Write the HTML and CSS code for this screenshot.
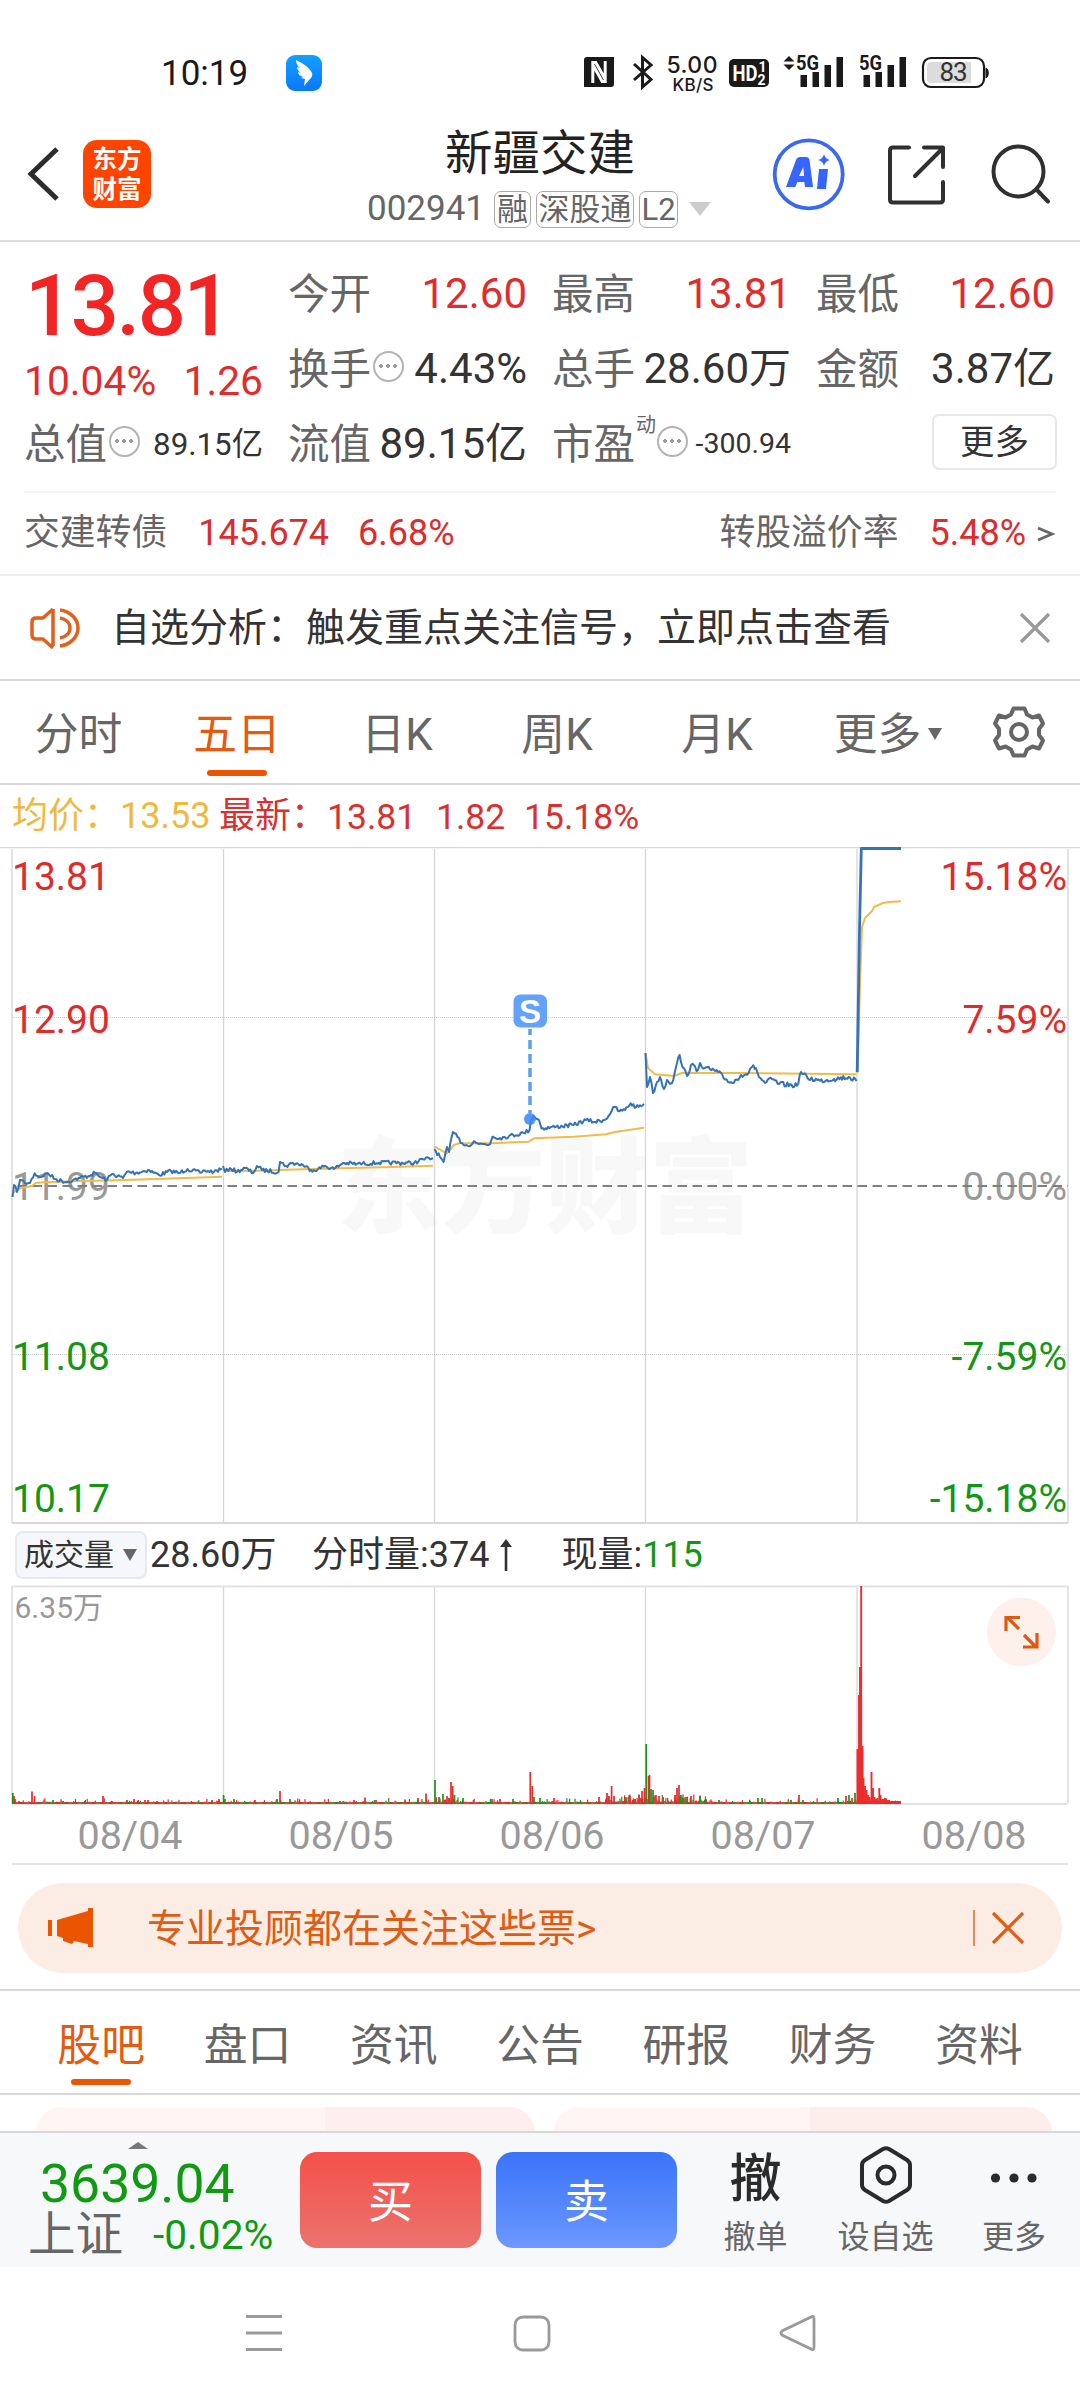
FILE: index.html
```html
<!DOCTYPE html>
<html lang="zh-CN">
<head>
<meta charset="utf-8">
<title>新疆交建 002941</title>
<link rel="stylesheet" href="styles.css">
</head>
<body>
<div class="status">
  <span class="clock">10:19</span>
  <svg class="app-badge" width="36" height="36" viewBox="0 0 36 36"><defs><linearGradient id="bd" x1="0" y1="0" x2="0" y2="1"><stop offset="0" stop-color="#12a0ff"/><stop offset="1" stop-color="#0b78fb"/></linearGradient></defs><rect width="36" height="36" rx="9" fill="url(#bd)"/><path d="M10 5c8 4 14 8 16 13 1 3-1 5-3 7l-5 6 1-7-4-1 2-1c-3-1-5-3-5-5l3 1c-3-2-4-4-4-6l3 1c-3-3-4-5-4-8z" fill="#fff"/></svg>
  <svg class="sys" width="420" height="48" viewBox="575 46 420 48">
    <path fill="#1a1a1a" d="M587 57h27v27q0 3-3 3h-27V60q0-3 3-3z"/>
    <path d="M592.800 83V62.500h3l9 16M605.200 61v20.500h-3l-9-16" fill="none" stroke="#fff" stroke-width="3"/>
    <path d="M634 64l17 15.500-8.500 7.500V57.500l8.500 7.500-17 15" fill="none" stroke="#1a1a1a" stroke-width="3"/>
    <text x="666.500" y="73" class="sp1" textLength="51">5.00</text><text x="672.500" y="90.500" class="sp2" textLength="41">KB/S</text>
    <rect x="729" y="59" width="40" height="28" rx="5" fill="#1a1a1a"/>
    <text x="732.500" y="81" class="hd" textLength="25" lengthAdjust="spacingAndGlyphs">HD</text><text x="758.500" y="72" class="hds">1</text><text x="757.500" y="84.500" class="hds">2</text>
    <path d="M783.500 61.500L789 56l5.500 5.500zM783.500 64.500L789 70l5.500-5.500z" fill="#1a1a1a"/>
    <g fill="#1a1a1a"><text x="796" y="70" class="g5" textLength="23" lengthAdjust="spacingAndGlyphs">5G</text><path d="M800.500 75h6.500v12h-6.500zM812.500 72h6.500v15h-6.500zM824.500 65h6.500v22h-6.500zM836.500 57h6.500v30h-6.500z"/></g>
    <g fill="#1a1a1a" transform="translate(63 0)"><text x="796" y="70" class="g5" textLength="23" lengthAdjust="spacingAndGlyphs">5G</text><path d="M800.500 75h6.500v12h-6.500zM812.500 72h6.500v15h-6.500zM824.500 65h6.500v22h-6.500zM836.500 57h6.500v30h-6.500z"/></g>
    <rect x="923" y="58" width="61" height="29" rx="8" fill="#fff" stroke="#1a1a1a" stroke-width="2.200"/><path d="M931 62h40v21h-40a4 4 0 0 1-4-4V66a4 4 0 0 1 4-4z" fill="#dcdcdc"/><path d="M986 68c3 1 3 9 0 10z" fill="#1a1a1a" stroke="#1a1a1a"/>
    <text x="939.500" y="81" class="bat">83</text>
  </svg>
</div>

<header class="head">
  <svg class="back" width="36" height="60" viewBox="0 0 36 60"><path d="M32 5L6 30l26 25" fill="none" stroke="#2c2c2c" stroke-width="5"/></svg>
  <div class="logo"><span>东方</span><span>财富</span></div>
  <div class="title">
    <h1>新疆交建</h1>
    <p><span class="code">002941</span><b>融</b><b class="wide">深股通</b><b>L2</b><i></i></p>
  </div>
  <svg class="head-ic" width="300" height="80" viewBox="770 134 300 80" fill="none">
    <circle cx="808.700" cy="174.300" r="34" stroke="#3b68f0" stroke-width="3.800"/>
    <path fill="#3565fb" fill-rule="evenodd" d="M786 187l10-27q1-3 4-3h6q3 0 3.500 3l3.500 27h-8l-.7-5h-7l-2 5zM799 176h5l-.7-9zM819 169h9l-2 20h-9zM824 154q1 5 6 6-5 1-6 6-1-5-6-6 5-1 6-6z"/>
    <g stroke="#303030" stroke-width="4" stroke-linecap="round" stroke-linejoin="round"><path d="M909 147.500h-16q-3 0-3 3v49q0 3 3 3h47q3 0 3-3V182M924 147.500h19V167M942 149l-27 27"/><circle cx="1018.500" cy="171.500" r="25"/><path d="M1037 190l11 11.500"/></g>
  </svg>
</header>

<section class="quote">
  <div class="big">13.81</div>
  <div class="cell"><label>今开</label><em class="red">12.60</em></div>
  <div class="cell"><label>最高</label><em class="red">13.81</em></div>
  <div class="cell"><label>最低</label><em class="red">12.60</em></div>
  <div class="cell chg"><em class="red">10.04%</em><em class="red">1.26</em></div>
  <div class="cell"><label>换手</label><u></u><em>4.43%</em></div>
  <div class="cell"><label>总手</label><em>28.60万</em></div>
  <div class="cell"><label>金额</label><em>3.87亿</em></div>
  <div class="cell"><label>总值</label><u></u><em class="sm">89.15亿</em></div>
  <div class="cell"><label>流值</label><em>89.15亿</em></div>
  <div class="cell"><label>市盈</label><small>动</small><u></u><em class="sm pe">-300.94</em></div>
  <div class="cell"><span class="more">更多</span></div>
</section>

<section class="bond"><span>交建转债</span><em class="b1">145.674</em><em class="b2">6.68%</em><span class="prem">转股溢价率</span><em class="b3">5.48%</em><svg width="20" height="20" viewBox="0 0 20 20"><path d="M2 4l14 6-14 6" fill="none" stroke="#666" stroke-width="2.800"/></svg></section>

<section class="notice">
  <svg width="54" height="50" viewBox="28 602 54 50" fill="none" stroke="#e0601c" stroke-width="3.500"><path d="M53 608v37M53 608l-10 9h-7q-4 0-4 4v13q0 4 4 4h7l10 9" stroke-linejoin="round"/><path d="M60 609c9 1 18 8 18 18s-9 17-18 18M60 617c6 1 10 5 10 10s-4 9-10 10"/></svg>
  <span>自选分析：触发重点关注信号，立即点击查看</span>
  <svg class="x" width="34" height="34" viewBox="0 0 34 34"><path d="M3 3l28 28M31 3L3 31" stroke="#999" stroke-width="3.200"/></svg>
</section>

<nav class="periods">
  <span>分时</span><span class="on">五日</span><span>日K</span><span>周K</span><span>月K</span><span class="mr">更多<i></i></span>
  <svg width="56" height="56" viewBox="-28 -28 56 56" fill="none" stroke="#666" stroke-width="4"><path stroke-linejoin="round" d="M-5.500-23.500H5.500L8-17.500 13.500-14.500 20-16.500 24-8.500 20-3V3L24 8.500 20 16.500 13.500 14.500 8 17.500 5.500 23.500H-5.500L-8 17.500-13.500 14.500-20 16.500-24 8.500-20 3V-3L-24-8.500-20-16.500-13.500-14.500-8-17.500Z"/><circle r="8"/></svg>
</nav>

<section class="legend"><span class="avg">均价：</span><span class="avg v1">13.53</span><span class="now">最新：</span><span class="v2">13.81</span><span class="v3">1.82</span><span class="v4">15.18%</span></section>

<svg class="price" width="1080" height="678" viewBox="0 847 1080 678">
  <text class="wm" x="337" y="1225" textLength="416">东方财富</text>
  <path d="M0 847.500h1080" stroke="#d8d8d8" stroke-width="1.500"/>
  <path d="M223.500 849v674M434.500 849v674M645.500 849v674M857 849v674" stroke="#d6d6d6" stroke-width="1.300"/>
  <path d="M12 849v674M1068 849v674" stroke="#e2e2e2" stroke-width="2"/>
  <path d="M12 1523h1056" stroke="#d8d8d8" stroke-width="2"/>
  <path d="M12 1017.500h1056M12 1354.500h1056" stroke="#ccc" stroke-dasharray="1 1"/>
  <g class="axis"><text x="12" y="1200" class="gy">11.99</text><text x="1067" y="1200" class="gy r">0.00%</text></g>
  <path d="M12 1186h1056" stroke="#808080" stroke-width="2" stroke-dasharray="9.500 5.500" stroke-dashoffset="-5.500"/>
  <g id="lines" fill="none" stroke-linejoin="round"></g>
  <g class="axis">
    <text x="12" y="890" class="rd">13.81</text><text x="12" y="1033" class="rd">12.90</text><text x="12" y="1370" class="gn">11.08</text><text x="12" y="1512" class="gn">10.17</text>
    <text x="1067" y="890" class="rd r">15.18%</text><text x="1067" y="1033" class="rd r">7.59%</text><text x="1067" y="1370" class="gn r">-7.59%</text><text x="1067" y="1512" class="gn r">-15.18%</text>
  </g>
  <path d="M530 1029v84" stroke="#5c9fec" stroke-width="3.500" stroke-dasharray="9 5" stroke-dashoffset="3"/>
  <circle cx="530" cy="1119" r="6" fill="#3a86f6" opacity=".85"/>
  <rect x="513.500" y="994.500" width="33.500" height="33" rx="7" fill="#64a1fb"/><text x="530" y="1023" class="s">S</text>
</svg>

<section class="volhead"><span class="chip">成交量<i></i></span><span class="q1">28.60万</span><span class="q2">分时量:374</span><svg width="14" height="36" viewBox="0 0 14 36"><path d="M7 34V5" stroke="#333" stroke-width="2.600"/><path d="M1 10l6-8 6 8z" fill="#333"/></svg><span class="q3">现量:<b>115</b></span></section>

<svg class="vol" width="1080" height="282" viewBox="0 1584 1080 282">
  <path d="M12 1586.500h1056M12 1586v217M1068 1586v217" stroke="#e2e2e2" stroke-width="1.800" fill="none"/>
  <path d="M223.500 1587v217M434.500 1587v217M645.500 1587v217M857 1587v217" stroke="#d8d8d8" stroke-width="1.300"/>
  <path d="M12 1804h1056M12 1864h1056" stroke="#e3e3e3" stroke-width="2"/>
  <g id="bars"></g>
  <text class="vmax" x="14.500" y="1618">6.35万</text>
  <g class="dates"><text x="130" y="1849">08/04</text><text x="341" y="1849">08/05</text><text x="552" y="1849">08/06</text><text x="763" y="1849">08/07</text><text x="974" y="1849">08/08</text></g>
  <circle cx="1021.500" cy="1632" r="34.500" fill="#fef1eb"/>
  <path d="M1019 1629l-11-11M1006 1631v-13.500h14M1024 1635l11 11M1037 1633v14h-14" fill="none" stroke="#dd5a12" stroke-width="3.200"/>
</svg>

<section class="promo">
  <svg width="48" height="42" viewBox="47 1907 48 42" fill="#eb5500"><path d="M48 1920h4v16h-4zM57 1920l31-9v-3h5v39h-5v-3l-14-3-2 3-9-3v-3l-6-2z"/></svg>
  <span>专业投顾都在关注这些票&gt;</span><s></s>
  <svg class="px" width="34" height="34" viewBox="0 0 34 34"><path d="M2 2l30 30M32 2L2 32" stroke="#e55c14" stroke-width="3.200"/></svg>
</section>

<nav class="tabs"><span class="on">股吧</span><span>盘口</span><span>资讯</span><span>公告</span><span>研报</span><span>财务</span><span>资料</span></nav>
<section class="cards"><div class="c1"></div><div class="c2"></div></section>

<footer class="bar">
  <div class="index"><i></i><strong>3639.04</strong><p><span>上证</span><em>-0.02%</em></p></div>
  <a class="buy">买</a><a class="sell">卖</a>
  <div class="act a1"><b>撤</b><span>撤单</span></div>
  <div class="act a2"><svg width="60" height="62" viewBox="-30 -31 60 62" fill="none" stroke="#2b2b2b" stroke-width="4"><path stroke-linejoin="round" d="M-3-26q3-1.500 6 0L21-15q3 2 3 5V10q0 3-3 5L3 26q-3 1.500-6 0L-21 15q-3-2-3-5V-10q0-3 3-5z"/><circle r="8.500"/></svg><span>设自选</span></div>
  <div class="act a3"><svg width="60" height="62" viewBox="-30 -31 60 62" fill="#2b2b2b"><circle cx="-18.500" cy="3" r="4.600"/><circle cy="3" r="4.600"/><circle cx="18" cy="3" r="4.600"/></svg><span>更多</span></div>
</footer>
<div class="sysnav">
  <svg width="1080" height="60" viewBox="0 2304 1080 60" fill="none" stroke="#9a9a9a" stroke-width="2.800"><path d="M246 2317.500h36M246 2334h36M246 2350.500h36"/><rect x="515" y="2318" width="34" height="33" rx="8"/><path d="M814 2320v28q0 4-3 2l-29-14q-2-2 0-4l29-14q3-2 3 2z"/></svg>
</div>
<script src="chart.js"></script>
</body>
</html>
```
FILE: styles.css
```css
*{box-sizing:border-box}
html,body{margin:0;padding:0}
body{width:1080px;height:2400px;background:#fff;font-family:Roboto,"Noto Sans CJK SC",sans-serif;line-height:1.2;color:#333;overflow:hidden;display:flex;flex-direction:column}
body>*{flex:none}
svg{display:block;flex:none}
em,i,u,s{font-style:normal;text-decoration:none}
h1,p{margin:0;font-weight:400}
span,em{white-space:nowrap}

.status{height:108px;padding-top:46px;display:flex;align-items:flex-start}
.clock{margin:6px 0 0 161px;width:125px;font-size:35px;line-height:44px;color:#1a1a1a}
.app-badge{margin-top:9px}
.sys{margin-left:253px;overflow:visible}
.sp1{font:500 23px Inter,sans-serif;fill:#1a1a1a}
.sp2{font:500 17px Inter,sans-serif;fill:#1a1a1a}
.hd{font:700 22px Roboto,sans-serif;fill:#fff}
.hds{font:700 14px Roboto,sans-serif;fill:#fff}
.g5{font:700 20px Roboto,sans-serif}
.bat{font:400 26px Roboto,sans-serif;fill:#333;letter-spacing:-1px}

.head{height:134px;border-bottom:2px solid #ddd;display:flex;align-items:flex-start}
.back{margin:36px 0 0 25px}
.logo{margin:32px 0 0 22px;width:68px;height:68px;border-radius:14px;background:#ff4400;color:#fff;font-weight:700;font-size:24.500px;display:flex;flex-direction:column;align-items:center;padding-top:5px}
.logo span{line-height:30px}
.title{width:500px;margin-left:140px}
.title h1{font-size:47.500px;line-height:60px;margin:16px 0 0 154px;color:#222}
.title p{display:flex;align-items:center;color:#666;margin:6px 0 0 76px;height:38px}
.code{font-size:35px;width:127px}
.title b{font-weight:400;font-size:31px;line-height:35px;height:37px;border:1.500px solid #aaa;border-radius:7px;margin-right:5px;width:37px;display:flex;justify-content:center}
.title b.wide{width:98px}
.title b:last-of-type{width:39px}
.title i{border:11px solid transparent;border-top:14px solid #ccc;border-bottom:0;margin-left:6px}
.head-ic{margin:26px 0 0 -21px}

.quote{height:250px;padding:15px 25px 0;display:grid;grid-template-columns:repeat(4,238px);column-gap:26px;grid-template-rows:75px 75px 75px}
.big{font-size:85px;font-weight:500;line-height:98px;color:#f22424;letter-spacing:-2.500px;height:75px}
.cell{display:flex;align-items:center;font-size:42px;height:75px}
.cell label{color:#666;font-size:41.500px;margin-left:-1px}
.cell em{margin-left:auto}
.cell .sm{font-size:31.300px}
.cell .pe{font-size:28.500px}
.cell small{font-size:20px;color:#666;margin:-40px -1px 0 1px}
.cell u{width:31px;height:31px;border:2.500px solid #b3b3b3;border-radius:50%;margin:-6px 0 0 2px;background:radial-gradient(circle 2px at 6px 13px,#999 99%,transparent),radial-gradient(circle 2px at 13px 13px,#999 99%,transparent),radial-gradient(circle 2px at 20px 13px,#999 99%,transparent)}
.red{color:#e22b2b}
.chg{padding-top:24px;font-size:40.800px}
.chg em:first-child{margin-left:-1px}
.more{margin:-5px -2px 0 auto;width:125px;height:56px;border:2px solid #e8e8e8;border-radius:7px;font-size:34.500px;line-height:52px;text-align:center}

.bond{height:85px;margin-top:-1px;padding:2px 24px 0;display:flex;align-items:center;font-size:35.800px;color:#666;border-bottom:2px solid #eee;background:linear-gradient(#f4f4f4,#f4f4f4) 24px 0/1032px 2px no-repeat}
.bond em{color:#dc2c2c;font-size:36px}
.b1{margin-left:31px}.b2{margin-left:29px}
.bond .prem{margin-left:auto}
.b3{margin:0 10px 0 31px}

.notice{height:105px;display:flex;align-items:center;border-bottom:2px solid #d8d8d8;padding:1px 29px 0 28px;font-size:39px}
.notice span{margin-left:29px}
.notice .x{margin-left:auto;margin-right:-1px}

.periods{height:104px;border-bottom:2px solid #d8d8d8;display:flex;align-items:center;font-size:43.800px;color:#666}
.periods span{width:160px;text-align:center;line-height:111px;height:104px;position:relative}
.periods span:first-child{width:157px}
.periods .mr{width:182px}
.periods .mr i{display:inline-block;border:7.500px solid transparent;border-top:12px solid #666;border-bottom:0;margin:0 0 10px 7px}
.periods svg{margin-left:12px}
.on{color:#e35a10}
.on::after{content:"";position:absolute;left:50%;margin-left:-30px;bottom:8px;width:60px;height:6px;border-radius:3px;background:#ea5504}

.legend{height:62px;padding-top:2px;display:flex;align-items:center;font-size:36px;color:#d93030;padding-left:12px}
.legend .avg{color:#f0b93e}
.legend span{width:108px}
.legend .v1{width:99px;font-size:36px}
.legend .v2{width:109px;font-size:35.500px}
.legend .v3{width:88px;font-size:35.500px}
.legend .v4{font-size:35.500px}

.axis text{font:400 39px Roboto,sans-serif}
.axis .r{text-anchor:end}
.rd{fill:#dd2c2c}.gn{fill:#149614}.gy{fill:#999}
.wm{font:900 104px "Noto Sans CJK SC",sans-serif;fill:#f8f8f8}
.s{font:700 33px "Liberation Sans",sans-serif;fill:#fff;text-anchor:middle}

.volhead{height:59px;display:flex;align-items:center;font-size:36px;padding:1px 0 0 15px}
.chip{width:132px;height:48px;background:#f5f7fa;border:2px solid #e6e9ee;border-radius:8px;font-size:30px;line-height:44px;padding-left:7px;margin-top:-1px}
.chip i{display:inline-block;border:7px solid transparent;border-top:12px solid #666;border-bottom:0;margin:0 0 4px 9px}
.q1{width:166px;margin-left:3px;padding-top:1px}
.q2{margin-right:10px;margin-left:-4px;padding-top:1px}
.q3{margin-left:48px;padding-top:1px}
.q3 b{font-weight:400;color:#149614}
.vmax{font:400 30px Roboto,"Noto Sans CJK SC",sans-serif;fill:#999}
.dates text{font:400 39.500px Roboto,sans-serif;fill:#999;text-anchor:middle}

.promo{margin:17px 18px 16px;height:90px;border-radius:50px;background:#fcede4;display:flex;align-items:center;padding-left:29px;font-size:39px;color:#df5c14}
.promo span{margin-left:52px;margin-right:auto;padding-top:2px}
.promo s{width:2px;height:36px;background:#e08a5c}
.promo .px{margin:0 37px 0 16px}

.tabs{height:106px;border-top:2px solid #d8d8d8;border-bottom:2px solid #d8d8d8;display:flex;padding-left:28px;font-size:43.800px;color:#666}
.tabs span{width:146.300px;text-align:center;line-height:111px;height:102px;position:relative}
.tabs .on{color:#e35a10}
.cards{height:36px;padding:12px 28px 0 36px;display:flex;gap:19px;overflow:hidden}
.cards div{height:60px;border-radius:26px 26px 0 0;width:499px;background:linear-gradient(90deg,#fff5f3 58%,#fdefed 58%)}
.cards .c2{background:linear-gradient(90deg,#fff5f3 51.500%,#fdeeec 51.500%)}

.bar{height:136px;background:#f6f8fa;border-top:2px solid #d8d8d8;display:flex;align-items:flex-start}
.index{width:300px;display:flex;flex-direction:column;padding-left:28px}
.index i{border:10px solid transparent;border-bottom:7px solid #777;border-top:0;margin:9px 0 0 100px;width:0}
.index strong{font-weight:400;font-size:53.500px;line-height:60px;color:#0f9a12;margin:5px 0 0 12px}
.index p{display:flex;align-items:center;font-size:47.500px;line-height:48px;margin-top:-3px;color:#666}
.index em{font-size:40.700px;color:#0f9a12;margin:-1px 0 0 30px}
.buy,.sell{width:181px;height:96px;border-radius:17px;margin:19px 15px 0 0;color:#fff;font-size:45px;line-height:101px;text-align:center}
.buy{background:linear-gradient(#f4504a,#eb736d)}
.sell{background:linear-gradient(#3a74f9,#6c98ff);margin-right:31px}
.act{width:95px;text-align:center;font-size:32px;color:#666;display:flex;flex-direction:column;align-items:center;padding-top:11px}
.act svg,.act b{height:62px}
.act b{font-size:52px;line-height:71px;font-weight:500;color:#2b2b2b}
.act span{line-height:40px;margin-top:11px}
.act.a2{width:165px}
.act.a3{width:92px}
.sysnav{padding-top:36px}
```
FILE: chart.js
```js
// Deterministic pseudo-random source, so that the small ticks never change between loads.
let seed = 7;
const rnd = () => (seed = (seed * 16807) % 2147483647) / 2147483647;
const NS = 'http://www.w3.org/2000/svg';
const pairs = s => s.trim().split(/\s+/).map(p => p.split(',').map(Number));

function line(points, color, jitter, width) {
  let d = '';
  points.forEach(([x, y], i) => {
    if (i && jitter) {
      const [px, py] = points[i - 1];
      const n = Math.floor((x - px) / 1.3);
      for (let k = 1; k < n; k++) {
        d += `L${(px + (x - px) * k / n).toFixed(1)} ${(py + (y - py) * k / n + (rnd() - .5) * jitter).toFixed(1)}`;
      }
    }
    d += (i ? 'L' : 'M') + x + ' ' + y;
  });
  const p = document.createElementNS(NS, 'path');
  p.setAttribute('d', d);
  p.setAttribute('stroke', color);
  p.setAttribute('stroke-width', width);
  document.getElementById('lines').appendChild(p);
}

const average = [
  '12.5,1193 21,1188 32,1186 36,1182.700 71,1181.300 125,1180 179,1178.300 222,1176.700',
  '223,1171 257,1170.700 286,1169.700 339,1168.300 393,1167 433,1165.700',
  '434.500,1146.700 447,1153.300 454,1145 459,1143.300 491,1143.300 529,1141.700 534,1138.300 574,1136.700 606,1134.300 615,1132 644,1127.700',
  '645.500,1053 648,1068 655,1074.300 674,1076 682,1073 741,1073 856.500,1074.300',
  '857.500,1073 860,983 862,927 865,918 872,911 874,907 883,903 889,902 901,901.300'
];
const price = [
  '12.500,1197 14,1185 17,1192 20,1180 25,1183 30,1183 34.600,1173.300 39,1177 48,1173.300 55,1179 66,1182 73,1180 80,1178 91,1175 95,1172.700 100,1177 107,1180 112,1174 123,1178 127,1171.700 136,1173 148,1170 159,1175 171,1171 179,1173 187.500,1169 200,1172.700 205,1170.700 214,1171.700 222,1169',
  '223,1166 225,1172 230,1168 237,1171.700 245,1168 253,1173 257,1166 262,1170 278.600,1172 280,1162 286,1166 293,1163 303,1165 311,1170 318,1169 325,1166 334,1169 343,1163 357,1164 379,1162.700 414,1163 423,1159.300 433,1158.300',
  '434.300,1149 440,1157 443.600,1162 447,1147 449,1152 453,1132 457.500,1137 462,1143 468,1146 474,1141 479,1144 490,1144.300 492.500,1136.700 500,1138 509,1136 523.600,1133 529.600,1130 531,1120 533.600,1116 539,1120 541.500,1128.500 556,1126.700 573.600,1125 586,1120 595,1122 605.700,1119.300 614.600,1106.700 618,1111 625,1110 630.700,1103.300 636,1107.300 644,1104',
  '645.500,1053 647,1087 650,1077 653,1093 657,1082 660,1077 664,1089 667,1080 672,1083 674.600,1073 677,1063 679.600,1055 682.500,1067 687,1076 691,1065 698,1070 700,1063 704.600,1068 718,1072 723.600,1078 732.500,1083 741,1075 748.600,1073 752,1067 756,1068 759,1077 765,1083 772,1079 779,1084 797,1085.700 801,1072 807.500,1078 820,1080.700 834,1079 848.600,1077 856.500,1081'
];
average.forEach(s => line(pairs(s), '#f2bb47', 0, 2));
price.forEach((s, i) => line(pairs(s), '#3573b8', i === 3 ? 5 : 4, 2));
line(pairs('857.200,1072 859.500,930 861.300,848.500 901,848.500'), '#3573b8', 0, 2.800);

// Volume bars: x, height; the letter tells the direction.
const base = 1804;
const bars = document.getElementById('bars');
function bar(x, h, color, w = 1.5) {
  const r = document.createElementNS(NS, 'rect');
  r.setAttribute('x', x - w / 2);
  r.setAttribute('y', base - h);
  r.setAttribute('width', w);
  r.setAttribute('height', h);
  r.setAttribute('fill', color);
  bars.appendChild(r);
}
const R = '#e32c2c', G = '#1a941a';
for (let x = 12.5; x < 900; x += 0.9) {
  const busy = (x > 605 && x < 710) || (x > 434 && x < 460);
  const h = 2 + Math.pow(rnd(), busy ? 2.500 : 14) * (busy ? 8 : 4);
  bar(x, h, rnd() < .68 || x > 858 ? R : G, 1.2);
}
const spikes = `12.8,11,g 14,8,r 15,5,r 19,3,r 32,12.500,r 34.500,8,r 53,4,g 63,3,g 103,8,r 127,4,r 134,5,r 145,4,r 148,4,r 157,3,r 212,4,r 219,5,r
223.600,9,g 225,5,g 234,5,g 255,4,r 277,5,g 280,13,r 290,5,g 340,3,r 354,4,r 365,6.500,r 376,4,r 405,4.500,r 418,6,r 426,10.500,r
435,24,g 439,7,g 443,10,g 447,8,r 449,6,r 451,22,r 452.700,18,r 454.500,9,g 463,6,g 492,5,r 500,5,r 513,5,g 530.300,32,r 532.300,18,r 534,7,g 540,6,g 554,6,r
599,7,r 607,11,r 609,8,r 611.600,18,r 614,8,r 625,7,r 630,8,r 635,5,r 639,9,r 642,13,r 644.500,16,r 646.200,60,g 648.500,28,r 649.500,29,r 651,15,g 653,14,g 656,9,r 659,8,r 663,7,r 675,9,r 677,16,r 679,19,r 681,9,g 683,6,g 686,7,g 691,8,r 700,8,g
719,4,g 758,6,g 762,6,g 791,4,g 799,9,r 803,4,g 838,6,g 846,8,r 849,9,g 852,6,r 855,11,g`;
spikes.trim().split(/\s+/).forEach(s => {
  const [x, h, c] = s.split(',');
  bar(+x, +h, c === 'r' ? R : G, 1.7);
});
const surge = '857.5,55 859,109 860,137 861.200,218 862.500,58 863.500,26 865,18 866.500,14 868,9 869.500,7 871.500,32 873,16 874.500,7 876,5 877.500,6 879.300,16 880.500,9 882,5 883.500,5 885,6 887,4 889,4 891,3 893,3 895,2.500 897,2';
pairs(surge).forEach(([x, h]) => bar(x, h, '#ee2a2a', 1.9));
bar(879, 3, '#ee2a2a', 44);
```
